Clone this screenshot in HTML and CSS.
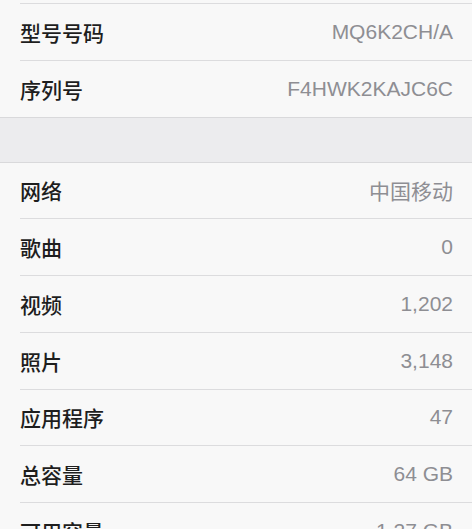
FILE: index.html
```html
<!DOCTYPE html>
<html lang="zh-CN">
<head>
<meta charset="utf-8">
<title>关于本机</title>
<link rel="stylesheet" href="styles.css">
</head>
<body>
<div class="group group-top">
  <div class="row"><span class="label">型号号码</span><span class="value">MQ6K2CH/A</span></div>
  <div class="row"><span class="label">序列号</span><span class="value">F4HWK2KAJC6C</span></div>
</div>
<div class="band"></div>
<div class="group group-main">
  <div class="row"><span class="label">网络</span><span class="value">中国移动</span></div>
  <div class="row"><span class="label">歌曲</span><span class="value">0</span></div>
  <div class="row"><span class="label">视频</span><span class="value">1,202</span></div>
  <div class="row"><span class="label">照片</span><span class="value">3,148</span></div>
  <div class="row"><span class="label">应用程序</span><span class="value">47</span></div>
  <div class="row"><span class="label">总容量</span><span class="value">64 GB</span></div>
  <div class="row"><span class="label">可用容量</span><span class="value">1.27 GB</span></div>
</div>
</body>
</html>
```

FILE: styles.css
```css
html, body {
  margin: 0;
  padding: 0;
}
body {
  width: 472px;
  height: 529px;
  overflow: hidden;
  background: #ececee;
  font-family: "Liberation Sans", "Noto Sans CJK SC", sans-serif;
}
.group {
  background: #f8f8f8;
}
.group-top {
  padding-top: 3px;
  border-bottom: 1px solid #d9d9db;
}
.group-main {
  border-top: 1px solid #d9d9db;
}
.band {
  height: 44px;
}
.row {
  box-sizing: border-box;
  height: 56.8px;
  margin-left: 20px;
  padding-right: 19px;
  display: flex;
  align-items: center;
  justify-content: space-between;
  border-top: 1px solid #dcdcde;
}
.group-main .row:first-child {
  border-top: none;
  height: 55.6px;
}
.label {
  font-family: "Noto Sans CJK SC", sans-serif;
  font-size: 21px;
  font-weight: 500;
  color: #1e1e1e;
}
.value {
  font-size: 21px;
  color: #8e8e93;
}
```
